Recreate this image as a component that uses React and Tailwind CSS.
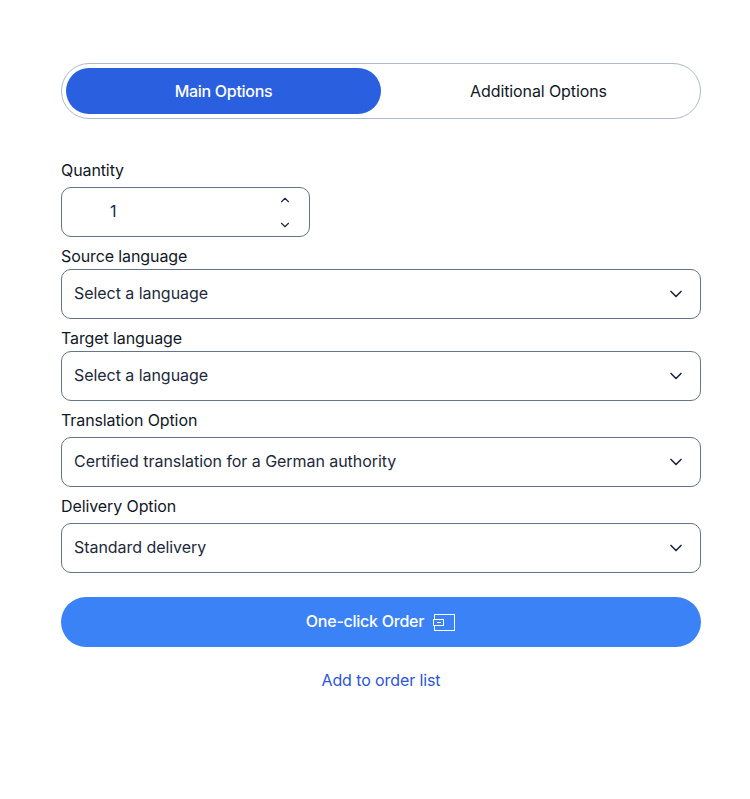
import React from 'react';
import { ChevronDown, ChevronUp } from 'lucide-react';

const fields = [
    { label: 'Source language', value: 'Select a language', labelClass: 'mt-[7px] mb-px' },
    { label: 'Target language', value: 'Select a language', labelClass: 'mt-[7px] mb-px' },
    { label: 'Translation Option', value: 'Certified translation for a German authority', labelClass: 'mt-[7px] mb-[5px]' },
    { label: 'Delivery Option', value: 'Standard delivery', labelClass: 'mt-[7px] mb-[5px]' },
];

const WalletIcon = () => (
    <svg width="23" height="17" viewBox="0 0 23 17" fill="none" stroke="currentColor" strokeWidth="1" shapeRendering="crispEdges">
        <path d="M1.5 5V0.5H21.5V16.5H1.5V12" />
        <path d="M0.5 5.5H10.5V11.5H0.5Z" />
        <path d="M4 8.5H8" />
    </svg>
);

const App = () => {
    return (
        <div className="min-h-[799px] bg-white pt-[63px] pl-[61px] font-['Inter',sans-serif] text-base tracking-[-0.1px] text-[#111827]">
            <div className="w-[640px]">
                {/* Tabs */}
                <div className="flex h-14 items-center rounded-full border border-[#adb9cc] p-1">
                    <button className="h-[46px] w-[315px] rounded-full bg-[#2a5fe0] font-medium tracking-[-0.3px] text-white">Main Options</button>
                    <button className="h-[46px] flex-1 rounded-full text-[#111827]">Additional Options</button>
                </div>

                <div className="mt-[39px] mb-[5px] leading-6">Quantity</div>
                <div className="flex h-[50px] w-[249px] items-center justify-between rounded-[10px] border border-[#64748b] pr-[17px] pl-[48px] text-[#1e293b]">
                    <span className="pb-0.5">1</span>
                    <div className="flex flex-col gap-[11px]">
                        <ChevronUp size={14} strokeWidth={2} />
                        <ChevronDown size={14} strokeWidth={2} />
                    </div>
                </div>

                {fields.map((field) => (
                    <div key={field.label}>
                        <div className={`leading-6 ${field.labelClass}`}>{field.label}</div>
                        <div className="flex h-[50px] items-center justify-between rounded-[10px] border border-[#64748b] pr-[14px] pl-3 text-[#1e293b]">
                            <span className="pb-0.5 tracking-[-0.05px]">{field.value}</span>
                            <ChevronDown size={20} strokeWidth={2} />
                        </div>
                    </div>
                ))}

                <button className="mt-6 flex h-[50px] w-full items-center justify-center gap-[9px] rounded-full bg-[#3b82f6] font-medium tracking-[-0.25px] text-white">
                    <span className="pb-0.5">One-click Order</span>
                    <WalletIcon />
                </button>
                <div className="mt-[21px] text-center leading-6 text-[#2d55d8]">Add to order list</div>
            </div>
        </div>
    );
};

export default App;
